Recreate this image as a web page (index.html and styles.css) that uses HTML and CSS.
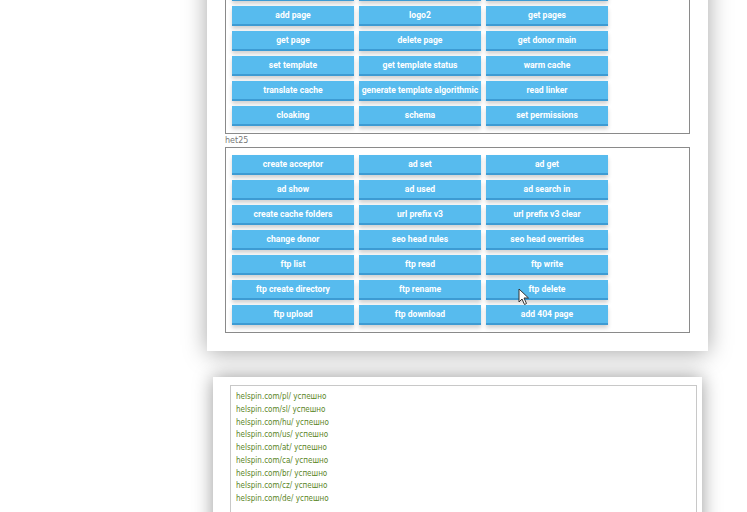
FILE: index.html
```html
<!DOCTYPE html>
<html lang="en">

<head>
  <meta charset="UTF-8">
  <meta name="viewport" content="width=device-width, initial-scale=1.0">
  <title>Tools</title>
  <link rel="stylesheet" href="styles.css">
</head>

<body>
  <div class="panel">
    <div class="group">
      <!-- this row is scrolled out of view -->
      <button class="btn"></button>
      <button class="btn"></button>
      <button class="btn"></button>
      <button class="btn">add page</button>
      <button class="btn">logo2</button>
      <button class="btn">get pages</button>
      <button class="btn">get page</button>
      <button class="btn">delete page</button>
      <button class="btn">get donor main</button>
      <button class="btn">set template</button>
      <button class="btn">get template status</button>
      <button class="btn">warm cache</button>
      <button class="btn">translate cache</button>
      <button class="btn">generate template algorithmic</button>
      <button class="btn">read linker</button>
      <button class="btn">cloaking</button>
      <button class="btn">schema</button>
      <button class="btn">set permissions</button>
    </div>
    <div class="group-title">het25</div>
    <div class="group">
      <button class="btn">create acceptor</button>
      <button class="btn">ad set</button>
      <button class="btn">ad get</button>
      <button class="btn">ad show</button>
      <button class="btn">ad used</button>
      <button class="btn">ad search in</button>
      <button class="btn">create cache folders</button>
      <button class="btn">url prefix v3</button>
      <button class="btn">url prefix v3 clear</button>
      <button class="btn">change donor</button>
      <button class="btn">seo head rules</button>
      <button class="btn">seo head overrides</button>
      <button class="btn">ftp list</button>
      <button class="btn">ftp read</button>
      <button class="btn">ftp write</button>
      <button class="btn">ftp create directory</button>
      <button class="btn">ftp rename</button>
      <button class="btn">ftp delete</button>
      <button class="btn">ftp upload</button>
      <button class="btn">ftp download</button>
      <button class="btn">add 404 page</button>
    </div>
  </div>

  <div class="panel log-panel">
    <div class="log">
      <div>helspin.com/pl/ успешно</div>
      <div>helspin.com/sl/ успешно</div>
      <div>helspin.com/hu/ успешно</div>
      <div>helspin.com/us/ успешно</div>
      <div>helspin.com/at/ успешно</div>
      <div>helspin.com/ca/ успешно</div>
      <div>helspin.com/br/ успешно</div>
      <div>helspin.com/cz/ успешно</div>
      <div>helspin.com/de/ успешно</div>
    </div>
  </div>

  <!-- mouse pointer over "ftp delete" -->
  <svg class="cursor" width="12" height="18" viewBox="0 0 12 18">
    <path d="M1 1 L1 14 L4 11 L6.5 16.5 L8.5 15.5 L6 10 L10.5 10 Z" fill="#fff" stroke="#333" stroke-width="1" stroke-linejoin="round"/>
  </svg>
</body>

</html>
```

FILE: styles.css
```css
body {
  margin: 0;
  background-color: #fff;
  font-family: "DejaVu Sans", Verdana, sans-serif;
  position: relative;
}

.panel {
  width: 465px;
  margin: -45px 0 0 207px;
  padding: 18px 18px 18px 18px;
  background-color: #fff;
  box-shadow: 0 2px 22px rgba(0, 0, 0, 0.35);
}

.group {
  display: grid;
  grid-template-columns: repeat(3, 122px);
  gap: 5px;
  padding: 7px 6px;
  border: 1px solid #8a8a8a;
}

.group-title {
  font-size: 8px;
  line-height: 12px;
  color: #777;
  padding-top: 1px;
}

.btn {
  height: 20px;
  padding: 0;
  border: none;
  border-bottom: 2px solid #3d9bd3;
  background-color: #57bbee;
  color: #fff;
  font-family: Roboto, "Liberation Sans", sans-serif;
  font-weight: bold;
  font-size: 8.6px;
  box-shadow: 0 3px 4px rgba(0, 0, 0, 0.18);
  white-space: nowrap;
  overflow: hidden;
}

.log-panel {
  width: 467px;
  margin: 26px 0 0 213px;
  padding: 8px 5px 0 17px;
  box-shadow: 0 0 18px rgba(0, 0, 0, 0.4);
}

.log {
  height: 140px;
  padding: 5px 5px;
  border: 1px solid #c8c8c8;
  font-family: "DejaVu Sans Condensed", "DejaVu Sans", sans-serif;
  font-size: 8px;
  line-height: 12.75px;
  color: #5a8526;
}

.cursor {
  position: absolute;
  left: 518px;
  top: 288px;
}
```
